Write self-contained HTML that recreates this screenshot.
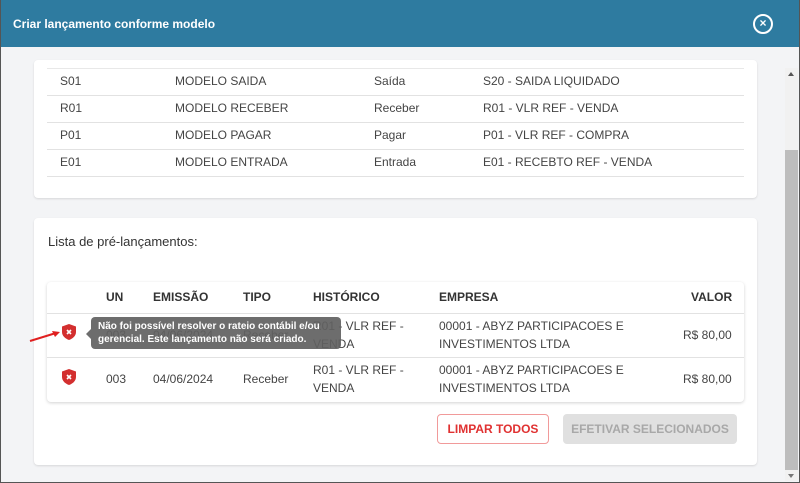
<!DOCTYPE html>
<html><head><meta charset="utf-8"><style>
*{box-sizing:border-box;margin:0;padding:0}
body{width:800px;height:483px;overflow:hidden;background:#f3f4f6;font-family:"Liberation Sans",Arial,sans-serif;position:relative;color:#444;font-size:12px}
.frame{position:absolute;inset:0;border:1px solid #555;border-top:none;pointer-events:none;z-index:9}
.hdr{position:absolute;left:0;top:0;width:800px;height:47px;background:#2e7ba0;color:#fff;font-weight:bold;font-size:12px;padding:17px 0 0 13px}
.close{position:absolute;left:753px;top:14px;width:20px;height:20px;border:2px solid #fff;border-radius:50%;color:#fff;font-size:12px;line-height:15px;text-align:center;font-weight:bold}
.card{position:absolute;background:#fff;border-radius:4px;box-shadow:0 1px 2px rgba(0,0,0,.12)}
.r{position:absolute;left:47px;width:697px;height:27px;border-bottom:1px solid #e2e2e2}
.r span{position:absolute;top:5px;font-size:12px;color:#444}
.sb{position:absolute;left:785px;top:68px;width:13px;height:413px;background:#f1f1f1}
.th{position:absolute;left:785px;top:150px;width:13px;height:320px;background:#bdbdbd}
.t{position:absolute;font-size:12px;color:#444;line-height:18px}
.h{font-weight:bold;color:#333}
.shield{position:absolute;width:14px;height:16px}
</style></head><body>
<div class="hdr">Criar lançamento conforme modelo</div>
<div class="close">×</div>
<div class="card" style="left:34px;top:60px;width:723px;height:138px"></div>
<div class="r" style="top:68px;height:1px;border:none;background:#e8e8e8"></div>
<div class="r" style="top:69px"><span style="left:13px">S01</span><span style="left:128px">MODELO SAIDA</span><span style="left:327px">Saída</span><span style="left:436px">S20 - SAIDA LIQUIDADO</span></div>
<div class="r" style="top:96px"><span style="left:13px">R01</span><span style="left:128px">MODELO RECEBER</span><span style="left:327px">Receber</span><span style="left:436px">R01 - VLR REF - VENDA</span></div>
<div class="r" style="top:123px"><span style="left:13px">P01</span><span style="left:128px">MODELO PAGAR</span><span style="left:327px">Pagar</span><span style="left:436px">P01 - VLR REF - COMPRA</span></div>
<div class="r" style="top:150px"><span style="left:13px">E01</span><span style="left:128px">MODELO ENTRADA</span><span style="left:327px">Entrada</span><span style="left:436px">E01 - RECEBTO REF - VENDA</span></div>
<div class="card" style="left:34px;top:218px;width:723px;height:247px"></div>
<div class="t" style="left:48px;top:233px;font-size:13px;color:#333">Lista de pré-lançamentos:</div>
<div class="card" style="left:47px;top:282px;width:697px;height:120px;box-shadow:0 1px 3px rgba(0,0,0,.18)"></div>
<div style="position:absolute;left:47px;top:313px;width:697px;border-top:1px solid #e2e2e2"></div>
<div style="position:absolute;left:47px;top:357px;width:697px;border-top:1px solid #e2e2e2"></div>
<div class="t h" style="left:106px;top:288px">UN</div>
<div class="t h" style="left:153px;top:288px">EMISSÃO</div>
<div class="t h" style="left:243px;top:288px">TIPO</div>
<div class="t h" style="left:313px;top:288px">HISTÓRICO</div>
<div class="t h" style="left:439px;top:288px">EMPRESA</div>
<div class="t h" style="left:691px;top:288px">VALOR</div>
<div class="t" style="left:106px;top:326px">003</div>
<div class="t" style="left:153px;top:326px">04/06/2024</div>
<div class="t" style="left:243px;top:326px">Receber</div>
<div class="t" style="left:313px;top:317px">R01 - VLR REF -<br>VENDA</div>
<div class="t" style="left:439px;top:317px">00001 - ABYZ PARTICIPACOES E<br>INVESTIMENTOS LTDA</div>
<div class="t" style="left:683px;top:326px">R$ 80,00</div>
<div class="t" style="left:106px;top:370px">003</div>
<div class="t" style="left:153px;top:370px">04/06/2024</div>
<div class="t" style="left:243px;top:370px">Receber</div>
<div class="t" style="left:313px;top:361px">R01 - VLR REF -<br>VENDA</div>
<div class="t" style="left:439px;top:361px">00001 - ABYZ PARTICIPACOES E<br>INVESTIMENTOS LTDA</div>
<div class="t" style="left:683px;top:370px">R$ 80,00</div>
<svg class="shield" style="left:62px;top:324px" viewBox="0 0 14 16"><path d="M7 0L14 2.5V8C14 12 10.5 14.8 7 16C3.5 14.8 0 12 0 8V2.5Z" fill="#d32f2f"/><path d="M5 6l4 4M9 6l-4 4" stroke="#fff" stroke-width="1.6"/></svg>
<svg class="shield" style="left:62px;top:369px" viewBox="0 0 14 16"><path d="M7 0L14 2.5V8C14 12 10.5 14.8 7 16C3.5 14.8 0 12 0 8V2.5Z" fill="#d32f2f"/><path d="M5 6l4 4M9 6l-4 4" stroke="#fff" stroke-width="1.6"/></svg>
<div style="position:absolute;left:91px;top:317px;width:250px;height:32px;background:rgba(97,97,97,.92);border-radius:4px;color:#fff;font-weight:bold;font-size:10px;line-height:13px;padding:3px 7px"><span style="position:absolute;left:-5px;top:12px;border:5px solid transparent;border-left:0;border-right-color:rgba(97,97,97,.92)"></span>Não foi possível resolver o rateio contábil e/ou gerencial. Este lançamento não será criado.</div>
<svg style="position:absolute;left:28px;top:328px" width="34" height="16"><path d="M2 13L28 5" stroke="#e02020" stroke-width="2"/><path d="M32 4L24 3L27 9Z" fill="#e02020"/></svg>
<div style="position:absolute;left:437px;top:414px;width:112px;height:30px;border:1px solid #f19a9a;border-radius:4px;color:#e03131;font-weight:bold;font-size:12px;text-align:center;line-height:28px">LIMPAR TODOS</div>
<div style="position:absolute;left:563px;top:414px;width:174px;height:30px;background:#e0e0e0;border-radius:4px;color:#a8a8a8;font-weight:bold;font-size:12px;text-align:center;line-height:30px">EFETIVAR SELECIONADOS</div>
<div class="sb"></div><div class="th"></div>
<div style="position:absolute;left:788px;top:72px;border:3px solid transparent;border-bottom:4px solid #555;border-top:0"></div>
<div style="position:absolute;left:788px;top:474px;border:3px solid transparent;border-top:4px solid #777;border-bottom:0"></div>
<div class="frame"></div>
</body></html>
